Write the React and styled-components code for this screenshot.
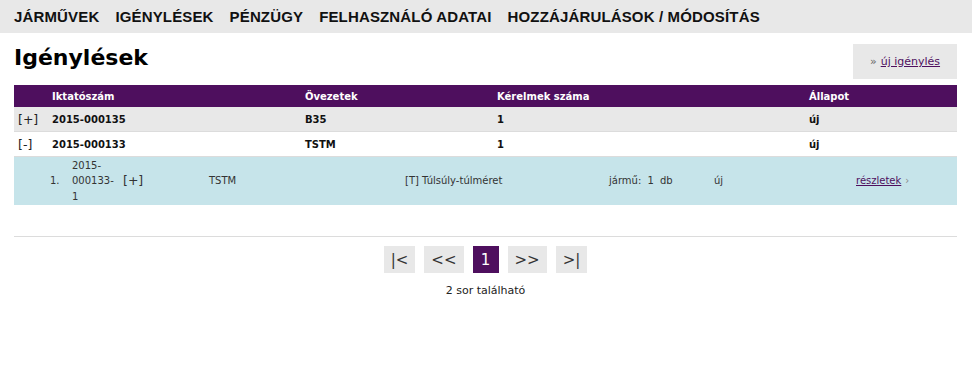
import React from "react";
import styled, { createGlobalStyle } from "styled-components";

const PURPLE = "#4e0f5e";
const GREY = "#e8e8e8";

const Global = createGlobalStyle`
  html, body { margin: 0; padding: 0; background: #fff; }
  body { font-family: "DejaVu Sans", Verdana, sans-serif; color: #111; }
  * { box-sizing: border-box; }
`;

const Nav = styled.nav`
  display: flex;
  gap: 16px;
  height: 33px;
  align-items: center;
  padding-left: 14px;
  background: ${GREY};
`;

const NavItem = styled.a`
  font-family: "Liberation Sans", Arial, sans-serif;
  font-weight: bold;
  font-size: 15px;
  letter-spacing: 0.15px;
  color: #111;
  text-decoration: none;
`;

const Main = styled.main`
  padding: 0 15px 0 14px;
`;

const TitleRow = styled.div`
  display: flex;
  justify-content: space-between;
  align-items: flex-start;
  margin-top: 11px;
`;

const Title = styled.h1`
  margin: 1px 0 0;
  font-size: 22px;
  line-height: 26px;
  font-weight: bold;
  color: #000;
`;

const NewButton = styled.div`
  width: 104px;
  height: 35px;
  background: ${GREY};
  display: flex;
  align-items: center;
  justify-content: center;
  gap: 4px;
  font-size: 11px;
  color: #666;
`;

const Link = styled.a`
  color: ${PURPLE};
  text-decoration: underline;
  font-size: ${(p) => p.$size || 11}px;
`;

const cols = "38px 253px 192px 312px 1fr";

const HeadRow = styled.div`
  display: grid;
  grid-template-columns: ${cols};
  height: 22px;
  align-items: center;
  background: ${PURPLE};
  color: #fff;
  font-size: 10px;
  font-weight: bold;
  margin-top: 6px;
`;

const Row = styled.div`
  display: grid;
  grid-template-columns: ${cols};
  height: 25px;
  align-items: center;
  background: ${(p) => (p.$alt ? GREY : "#fff")};
  border-bottom: 1px solid #dcdcdc;
  font-size: 10px;
  font-weight: bold;
  color: #111;
`;

const Toggle = styled.span`
  font-weight: normal;
  font-size: 12.5px;
  padding-left: 4px;
  color: #222;
`;

const SubRow = styled.div`
  display: grid;
  grid-template-columns: 22px 51px 86px 196px 204px 105px 142px 1fr;
  padding-left: 36px;
  height: 48px;
  align-items: center;
  background: #c6e4ea;
  font-size: 10px;
  color: #333;
  line-height: 15.5px;
`;

const SubId = styled.span`
  width: 46px;
`;

const SubToggle = styled.span`
  font-size: 12.5px;
  color: #333;
`;

const Spaced = styled.span`
  word-spacing: 3px;
`;

const Chevron = styled.span`
  color: #888;
  margin-left: 4px;
`;

const Divider = styled.hr`
  border: 0;
  border-top: 1px solid #dcdcdc;
  margin: 31px 0 0;
`;

const Pager = styled.div`
  display: flex;
  justify-content: center;
  gap: 9px;
  margin-top: 9px;
`;

const PageBtn = styled.span`
  height: 27px;
  padding: 0 7px;
  min-width: 26px;
  display: flex;
  align-items: center;
  justify-content: center;
  font-size: 15px;
  background: ${(p) => (p.$active ? PURPLE : GREY)};
  color: ${(p) => (p.$active ? "#fff" : "#333")};
`;

const Count = styled.div`
  text-align: center;
  font-size: 11px;
  color: #222;
  margin-top: 11px;
`;

export default function App() {
  return (
    <>
      <Global />
      <Nav>
        {["JÁRMŰVEK", "IGÉNYLÉSEK", "PÉNZÜGY", "FELHASZNÁLÓ ADATAI", "HOZZÁJÁRULÁSOK / MÓDOSÍTÁS"].map((t) => (
          <NavItem key={t}>{t}</NavItem>
        ))}
      </Nav>
      <Main>
        <TitleRow>
          <Title>Igénylések</Title>
          <NewButton>
            <span>»</span>
            <Link>új igénylés</Link>
          </NewButton>
        </TitleRow>
        <HeadRow>
          <span />
          <span>Iktatószám</span>
          <span>Övezetek</span>
          <span>Kérelmek száma</span>
          <span>Állapot</span>
        </HeadRow>
        <Row $alt>
          <Toggle>[+]</Toggle>
          <span>2015-000135</span>
          <span>B35</span>
          <span>1</span>
          <span>új</span>
        </Row>
        <Row>
          <Toggle>[-]</Toggle>
          <span>2015-000133</span>
          <span>TSTM</span>
          <span>1</span>
          <span>új</span>
        </Row>
        <SubRow>
          <span>1.</span>
          <SubId>2015-000133-1</SubId>
          <SubToggle>[+]</SubToggle>
          <span>TSTM</span>
          <span>[T] Túlsúly-túlméret</span>
          <Spaced>jármű: 1 db</Spaced>
          <span>új</span>
          <span>
            <Link $size={10}>részletek</Link>
            <Chevron>›</Chevron>
          </span>
        </SubRow>
        <Divider />
        <Pager>
          <PageBtn>|&lt;</PageBtn>
          <PageBtn>&lt;&lt;</PageBtn>
          <PageBtn $active>1</PageBtn>
          <PageBtn>&gt;&gt;</PageBtn>
          <PageBtn>&gt;|</PageBtn>
        </Pager>
        <Count>2 sor található</Count>
      </Main>
    </>
  );
}
